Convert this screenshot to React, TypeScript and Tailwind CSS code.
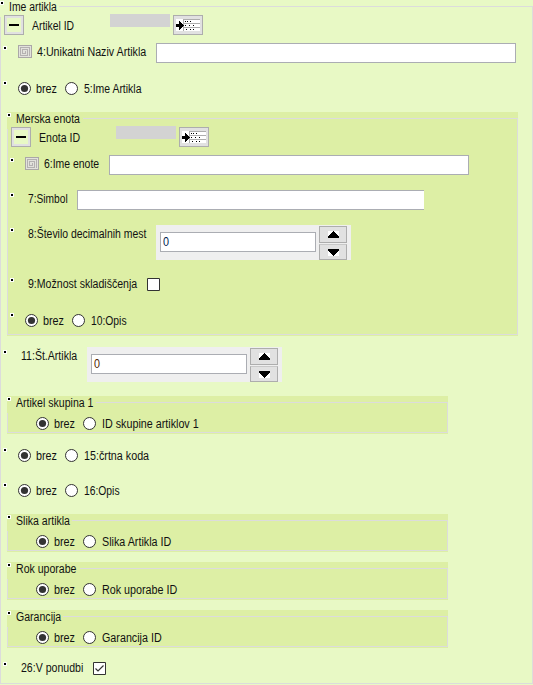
import type { ReactNode } from "react";

const LINE = "border-[#dcdcdc]";

function Marker({ className = "ml-[2px] mt-[3px]" }: { className?: string }) {
  return (
    <div className={`size-[4px] shrink-0 border border-white bg-black ${className}`} />
  );
}

function Text({ children, slot, scale = "scale-x-[.88]" }: { children: string; slot: string; scale?: string }) {
  return (
    <div className={`h-[16px] shrink-0 ${slot}`}>
      <span className={`block w-max origin-left whitespace-pre text-[12px] leading-[16px] text-[#111] ${scale}`}>
        {children}
      </span>
    </div>
  );
}

function Row({ children, h }: { children: ReactNode; h: string }) {
  return <div className={`flex items-start ${h}`}>{children}</div>;
}

function Group({ title, legend, scale, className, children }: {
  title: string; legend: string; scale?: string; className: string; children: ReactNode;
}) {
  return (
    <section className={`flex flex-col pb-px ${className}`}>
      <div className="flex h-[14px] items-start">
        <Marker className="mt-px" />
        <Text slot={`ml-[5px] -mt-px ${legend}`} scale={scale}>{title}</Text>
        <div className={`mt-[6px] h-[8px] flex-1 border-t border-r ${LINE}`} />
      </div>
      <div className="flex flex-1">
        <div className={`mt-[3px] w-px shrink-0 border-l ${LINE}`} />
        <div className={`flex-1 border-r border-b ${LINE}`}>{children}</div>
      </div>
    </section>
  );
}

function IdRow({ label, slot, scale }: { label: string; slot: string; scale?: string }) {
  return (
    <Row h="h-[29px]">
      <div className="ml-[3px] mt-px flex size-[20px] shrink-0 items-center justify-center border border-[#adadad] bg-[#e1e1e1]">
        <div className="flex size-[14px] items-center justify-center bg-[#e8f9c5]">
          <div className="h-[2px] w-[10px] bg-black" />
        </div>
      </div>
      <Text slot={`ml-[8px] mt-[4px] ${slot}`} scale={scale}>{label}</Text>
      <div className="h-[13px] w-[60px] shrink-0 bg-[#d3d3d3]" />
      <div className="ml-[3px] mt-px flex h-[20px] w-[30px] shrink-0 items-center justify-center border border-[#adadad] bg-[#e1e1e1]">
        <svg width="24" height="14" viewBox="0 0 24 14" shapeRendering="crispEdges">
          <path fill="#fff" d="M0 1h24v12H0z" />
          <path fill="#adadad" d="M7 1h17v1H7zM7 5h17v1H7zM7 9h17v1H7zM7 1h1v12H7z" />
          <path fill="#000" d="M0 6h3V3h1v1h1v1h1v1h1v1h1v1H7v1H6v1H5v1H4v1H3V9H0z" />
          <path fill="#000" d="M9 3h1v1H9zM11 3h1v1h-1zM14 3h1v1h-1zM9 7h1v1H9zM13 7h1v1h-1zM17 7h1v1h-1zM10 11h1v1h-1zM14 11h1v1h-1zM17 11h1v1h-1z" />
        </svg>
      </div>
    </Row>
  );
}

function Spiral() {
  return (
    <svg className="ml-[11px] mt-[2px] shrink-0" width="14" height="13" viewBox="0 0 14 13" shapeRendering="crispEdges">
      <path fill="#e2e2dc" d="M0 0h14v13H0z" />
      <path fill="none" stroke="#aaa7a7" d="M.5.5h13v12H.5z" />
      <path fill="none" stroke="#b4b1b1" d="M11.5 11V2.5h-9v8h7v-6h-5v4h3V6" />
    </svg>
  );
}

function Field({ width }: { width: string }) {
  return <div className={`h-[20px] shrink-0 border border-[#abadb3] bg-white ${width}`} />;
}

function Radio({ on, className }: { on?: boolean; className: string }) {
  return (
    <svg className={`shrink-0 ${className}`} width="13" height="13" viewBox="0 0 13 13">
      <circle cx="6.5" cy="6.5" r="6" fill="#fff" stroke="#333" />
      {on && <circle cx="6.5" cy="6.5" r="3.6" fill="#333" />}
    </svg>
  );
}

function Choice({ label, scale = "scale-x-[.895]" }: { label: string; scale?: string }) {
  return (
    <>
      <Text slot="ml-[5px] w-[29px]" scale="scale-x-[.9]">brez</Text>
      <Radio className="mt-px" />
      <Text slot="ml-[6px]" scale={scale}>{label}</Text>
    </>
  );
}

function RadioRow({ label, h, scale }: { label: string; h: string; scale?: string }) {
  return (
    <Row h={h}>
      <Marker />
      <div className="ml-[11px] mt-[3px] flex">
        <Radio on className="mt-px" />
        <Choice label={label} scale={scale} />
      </div>
    </Row>
  );
}

function RadioGroup({ title, label, legend, className, scale }: {
  title: string; label: string; legend: string; className: string; scale?: string;
}) {
  return (
    <Group title={title} legend={legend} className={`ml-[6px] h-[38px] w-[441px] bg-[#ddefa5] ${className}`}>
      <div className="ml-[28px] flex h-[22px] pt-[6px]">
        <Radio on className="mt-px" />
        <Choice label={label} scale={scale} />
      </div>
    </Group>
  );
}

function Arrow({ down }: { down?: boolean }) {
  return (
    <div className={`flex w-[28px] items-center justify-center border border-[#adadad] bg-[#e1e1e1] ${down ? "h-[16px] border-t-[#c8c8c8]" : "h-[17px]"}`}>
      <svg width="11" height="7" viewBox="0 0 11 7" shapeRendering="crispEdges">
        <path fill="#fff" d="M0 0h11v7H0z" />
        <path
          fill="#000"
          d={down
            ? "M0 0h11v2h-1v1H9v1H8v1H7v1H6v1H5V6H4V5H3V4H2V3H1V2H0z"
            : "M0 7h11V5h-1V4H9V3H8V2H7V1H6V0H5v1H4v1H3v1H2v1H1v1H0z"}
        />
      </svg>
    </div>
  );
}

function Spinner({ color }: { color: string }) {
  return (
    <div className="flex h-[35px] w-[195px] shrink-0 items-start bg-[#efefef] pl-[4px]">
      <div className={`mt-[7px] h-[20px] w-[156px] border border-[#abadb3] bg-white pl-[2px] ${color}`}>
        <span className="block w-max origin-left scale-x-[.9] text-[12px] leading-[18px]">0</span>
      </div>
      <div className="ml-[3px] mt-px flex flex-col gap-px">
        <Arrow />
        <Arrow down />
      </div>
    </div>
  );
}

function Check({ on }: { on?: boolean }) {
  return (
    <svg className="mt-[3px] shrink-0" width="13" height="13" viewBox="0 0 13 13">
      <path fill="#fff" stroke="#333" d="M.5.5h12v12H.5z" />
      {on && <path fill="none" stroke="#333" strokeWidth="1.2" d="M2.5 6.5 5 9l5.5-5.5" />}
    </svg>
  );
}

export default function App() {
  return (
    <main className="h-[685px] w-[533px] overflow-hidden bg-[#e8f9c5] font-['Liberation_Sans',Arial,sans-serif]">
      <Group title="Ime artikla" legend="w-[50px]" scale="scale-x-[.865]" className="h-[685px]">
        <IdRow label="Artikel ID" slot="w-[78px]" scale="scale-x-[.865]" />
        <Row h="h-[35px]">
          <Marker />
          <Spiral />
          <Text slot="ml-[5px] mt-px w-[119px]" scale="scale-x-[.89]">4:Unikatni Naziv Artikla</Text>
          <Field width="w-[360px]" />
        </Row>
        <RadioRow label="5:Ime Artikla" h="h-[34px]" scale="scale-x-[.87]" />

        <Group title="Merska enota" legend="w-[67px]" className="ml-[6px] h-[224px] w-[511px] bg-[#ddefa5]">
          <IdRow label="Enota ID" slot="w-[77px]" />
          <Row h="h-[35px]">
            <Marker />
            <Spiral />
            <Text slot="ml-[5px] mt-px w-[65px]" scale="scale-x-[.87]">6:Ime enote</Text>
            <Field width="w-[360px]" />
          </Row>
          <Row h="h-[35px]">
            <Marker />
            <Text slot="ml-[14px] mt-px w-[49px]" scale="scale-x-[.85]">7:Simbol</Text>
            <div className="h-[20px] w-[347px] border-y border-l border-[#abadb3] bg-white" />
          </Row>
          <Row h="h-[50px]">
            <Marker />
            <Text slot="ml-[14px] mt-px w-[128px]" scale="scale-x-[.87]">8:Število decimalnih mest</Text>
            <Spinner color="text-[#001c50]" />
          </Row>
          <Row h="h-[35px]">
            <Marker />
            <Text slot="ml-[14px] mt-px w-[119px]">9:Možnost skladiščenja</Text>
            <Check />
          </Row>
          <RadioRow label="10:Opis" h="h-[24px]" scale="scale-x-[.86]" />
        </Group>

        <div className="pt-[11px]">
          <Row h="h-[49px]">
            <Marker />
            <Text slot="ml-[14px] mt-px w-[66px]">11:Št.Artikla</Text>
            <Spinner color="text-[#501c00]" />
          </Row>
        </div>
        <RadioGroup title="Artikel skupina 1" legend="w-[80px]" label="ID skupine artiklov 1" className="mb-[11px]" />
        <RadioRow label="15:črtna koda" h="h-[35px]" />
        <RadioRow label="16:Opis" h="h-[34px]" scale="scale-x-[.86]" />
        <RadioGroup title="Slika artikla" legend="w-[56px]" label="Slika Artikla ID" className="mb-[10px]" />
        <RadioGroup title="Rok uporabe" legend="w-[64px]" label="Rok uporabe ID" className="mb-[10px]" />
        <RadioGroup title="Garancija" legend="w-[47px]" label="Garancija ID" className="mb-[11px]" />
        <Row h="h-[24px]">
          <Marker />
          <Text slot="ml-[14px] mt-px w-[72px]">26:V ponudbi</Text>
          <Check on />
        </Row>
      </Group>
    </main>
  );
}
